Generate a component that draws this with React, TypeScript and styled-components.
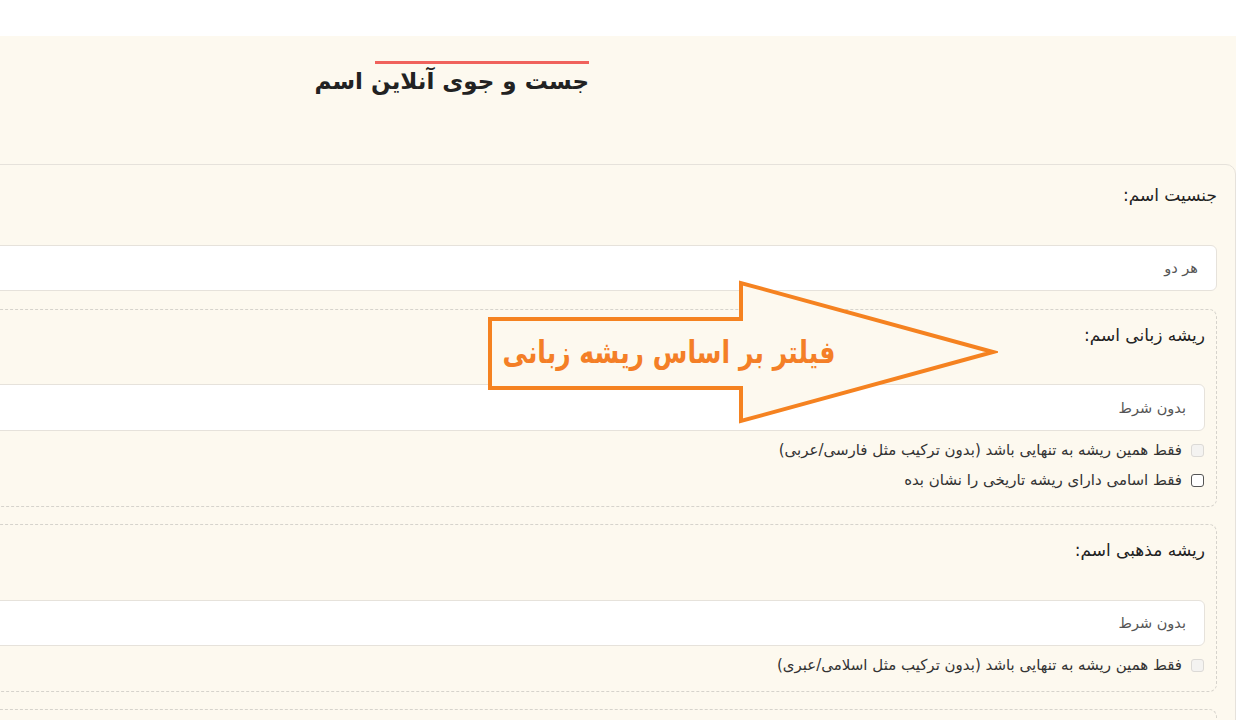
import styled, { createGlobalStyle } from "styled-components";

const GlobalStyle = createGlobalStyle`
  html, body {
    margin: 0;
    padding: 0;
    background: #fff;
    overflow: hidden;
  }
  * {
    box-sizing: border-box;
  }
`;

const Page = styled.div`
  position: relative;
  width: 1236px;
  height: 720px;
  overflow: hidden;
  direction: rtl;
  font-family: "DejaVu Sans", "Noto Sans", sans-serif;
  color: #222;
`;

const TopBar = styled.div`
  height: 36px;
  background: #fff;
`;

const Main = styled.div`
  display: flex;
  flex-direction: column;
  align-items: flex-start;
  height: 684px;
  background: #fdf9ef;
`;

const Header = styled.div`
  flex-shrink: 0;
  height: 128px;
  padding: 25px 647px 0 0;
`;

const Title = styled.h1`
  margin: 0;
  display: flex;
  flex-direction: column;
  align-items: flex-start;
  font-size: 23px;
  font-weight: 600;
  line-height: 32px;
  color: #222;

  &::before {
    content: "";
    display: block;
    width: 214px;
    height: 3px;
    margin-bottom: 1px;
    background: #f0625c;
  }
`;

const Panel = styled.div`
  flex-shrink: 0;
  width: 1500px;
  padding: 18px 18px 40px 0;
  border: 1px solid #e6e2db;
  border-top-right-radius: 10px;
  background: #fdf9ef;
  display: flex;
  flex-direction: column;
  gap: 17px;
`;

const Field = styled.div`
  display: flex;
  flex-direction: column;
  padding-bottom: 1px;
`;

const Group = styled.div`
  padding: 13px 11px 13px 0;
  border: 1px dashed #d6d3cc;
  border-radius: 8px;
  display: flex;
  flex-direction: column;
`;

const Label = styled.div<{ $gap?: number }>`
  height: 24px;
  margin-bottom: ${(p) => p.$gap ?? 38}px;
  font-size: 17px;
  line-height: 24px;
  color: #222;
`;

const Select = styled.div<{ $h?: number }>`
  height: ${(p) => p.$h ?? 47}px;
  padding-right: 18px;
  display: flex;
  align-items: center;
  background: #fff;
  border: 1px solid #e6e2db;
  border-radius: 6px;
  font-size: 14.5px;
  color: #555;
`;

const Checks = styled.div`
  margin-top: 6px;
  display: flex;
  flex-direction: column;
  gap: 4px;
`;

const CheckRow = styled.label`
  height: 26px;
  display: flex;
  align-items: center;
  gap: 9px;
  font-size: 15px;
  color: #333;
`;

const Box = styled.span<{ $disabled?: boolean }>`
  flex-shrink: 0;
  width: 13px;
  height: 13px;
  margin-right: 1px;
  border-radius: 3px;
  border: 1px solid ${(p) => (p.$disabled ? "#dcdad6" : "#555")};
  background: ${(p) => (p.$disabled ? "#f4f3f1" : "#fff")};
`;

const Annotation = styled.div`
  position: absolute;
  left: 486px;
  top: 279px;
  width: 512px;
  height: 148px;
`;

const Caption = styled.span`
  position: absolute;
  left: 17px;
  top: 50px;
  width: 332px;
  display: flex;
  justify-content: center;
  font-size: 31px;
  font-weight: 700;
  line-height: 46px;
  color: #f47f27;
  white-space: nowrap;
  transform: scaleX(0.81);
`;

const Check = ({ text, disabled }: { text: string; disabled?: boolean }) => (
  <CheckRow>
    <Box $disabled={disabled} />
    {text}
  </CheckRow>
);

export default function App() {
  return (
    <>
      <GlobalStyle />
      <Page>
        <TopBar />
        <Main>
          <Header>
            <Title>جست و جوی آنلاین اسم</Title>
          </Header>
          <Panel>
            <Field>
              <Label>جنسیت اسم:</Label>
              <Select $h={46}>هر دو</Select>
            </Field>
            <Group>
              <Label $gap={37}>ریشه زبانی اسم:</Label>
              <Select>بدون شرط</Select>
              <Checks>
                <Check disabled text="فقط همین ریشه به تنهایی باشد (بدون ترکیب مثل فارسی/عربی)" />
                <Check text="فقط اسامی دارای ریشه تاریخی را نشان بده" />
              </Checks>
            </Group>
            <Group>
              <Label>ریشه مذهبی اسم:</Label>
              <Select $h={46}>بدون شرط</Select>
              <Checks>
                <Check disabled text="فقط همین ریشه به تنهایی باشد (بدون ترکیب مثل اسلامی/عبری)" />
              </Checks>
            </Group>
            <Group>
              <Label />
              <Select />
            </Group>
          </Panel>
        </Main>
        <Annotation>
          <svg width="512" height="148" viewBox="0 0 512 148">
            <polygon
              points="4,40 255,40 255,4 507,73 255,142 255,109 4,109"
              fill="#fdf9ef"
              stroke="#f58220"
              strokeWidth="4"
              strokeLinejoin="miter"
            />
          </svg>
          <Caption>فیلتر بر اساس ریشه زبانی</Caption>
        </Annotation>
      </Page>
    </>
  );
}
